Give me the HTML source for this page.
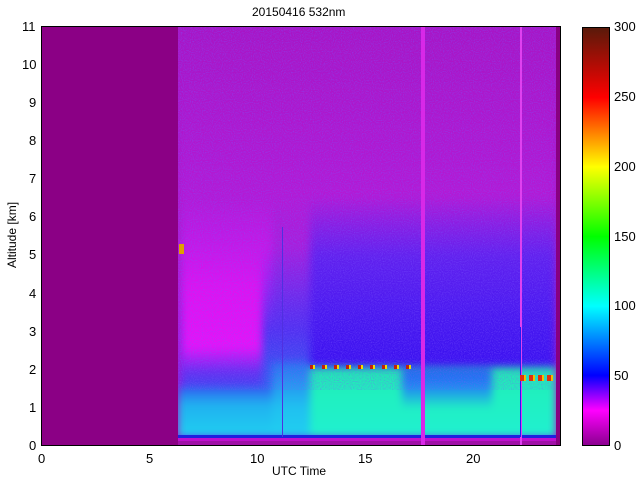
<!DOCTYPE html>
<html><head><style>
body{margin:0;width:640px;height:480px;background:#fff;position:relative;overflow:hidden;font-family:"Liberation Sans",sans-serif;font-size:13px;color:#000}
.a{position:absolute}
.t{position:absolute;white-space:nowrap}
</style></head><body>
<div class="t" style="left:252px;top:5px;font-size:12px">20150416 532nm</div>

<div class="a" style="left:42px;top:27px;width:519px;height:419px;background:#8b0085;overflow:hidden">
 <div class="a" style="left:136px;top:0;width:378px;height:419px;overflow:hidden;background:#a818c8">
  <div class="a" style="left:-10px;top:-10px;width:400px;height:440px;filter:blur(4px)">
  <div class="a" style="left:10px;top:10px;width:378px;height:419px;background:linear-gradient(180deg,#a814c4 0%,#b418d4 40%,#a020e0 62%,#8020e8 75%,#7020f0 100%)"></div>
  <div class="a" style="left:142px;top:180px;width:246px;height:170px;background:linear-gradient(180deg,rgba(110,30,230,0) 0%,#6020ee 35%,#4818f0 70%,#3a10f0 100%)"></div>
  <div class="a" style="left:14px;top:180px;width:90px;height:200px;background:linear-gradient(180deg,rgba(230,0,240,0) 0%,#e010f0 45%,#e810f8 75%,#6030f0 88%,#3050f0 100%)"></div>
  <div class="a" style="left:94px;top:230px;width:48px;height:140px;background:linear-gradient(180deg,rgba(90,40,230,0) 0%,#5030f0 60%,#3060f0 100%)"></div>
  <div class="a" style="left:10px;top:370px;width:132px;height:50px;background:linear-gradient(180deg,#3060f0 0%,#20b0f0 35%,#20d0f0 100%)"></div>
  <div class="a" style="left:104px;top:345px;width:38px;height:75px;background:linear-gradient(180deg,#2a70f0 0%,#20c0f0 60%,#20d0f0 100%)"></div>
  <div class="a" style="left:142px;top:350px;width:246px;height:70px;background:linear-gradient(180deg,#20e8b0 0%,#20f0c0 40%,#20f0d0 100%)"></div>
  <div class="a" style="left:234px;top:352px;width:90px;height:40px;background:linear-gradient(180deg,#2060f0 0%,#2090f0 50%,rgba(32,200,240,0) 100%)"></div>
  </div>
  <div class="a" style="left:0;top:408px;width:378px;height:3px;background:#2020e0"></div>
  <div class="a" style="left:0;top:411px;width:378px;height:3px;background:#c010d0"></div>
  <div class="a" style="left:0;top:414px;width:378px;height:5px;background:#a010a8"></div>
  <svg class="a" style="left:0;top:0" width="378" height="419"><filter id="n"><feTurbulence type="fractalNoise" baseFrequency="0.9" numOctaves="1" seed="3"/><feColorMatrix values="0 0 0 0 0.2  0 0 0 0 0.1  0 0 0 0 1  0 0 0 -2.2 1.3"/></filter><rect width="378" height="330" filter="url(#n)" opacity="0.5"/></svg>
 </div>
  <div class="a" style="left:379px;top:0;width:4px;height:419px;background:#d828e8"></div>
  <div class="a" style="left:478px;top:0;width:2px;height:419px;background:#e040f0"></div>
  <div class="a" style="left:478px;top:300px;width:1px;height:110px;background:#2020f0"></div>
  <div class="a" style="left:240px;top:200px;width:1px;height:210px;background:#5030e0"></div>
  <div class="a" style="left:268px;top:338px;width:105px;height:4px;background:repeating-linear-gradient(90deg,#c02010 0 3px,#f0e000 3px 5px,rgba(0,0,0,0) 5px 12px)"></div>
  <div class="a" style="left:478px;top:348px;width:36px;height:6px;background:repeating-linear-gradient(90deg,#e03010 0 4px,#f0c000 4px 6px,rgba(0,0,0,0) 6px 9px)"></div>
  <div class="a" style="left:137px;top:217px;width:5px;height:10px;background:#e0a000"></div>
  <div class="a" style="left:514px;top:0;width:5px;height:419px;background:#880080"></div>
</div>
<div class="a" style="left:41px;top:26px;width:520px;height:420px;border:1px solid #000;box-sizing:border-box"></div>

<div class="t" style="left:22px;top:19px">11</div>
<div class="t" style="left:22px;top:57px">10</div>
<div class="t" style="left:29px;top:95px">9</div>
<div class="t" style="left:29px;top:133px">8</div>
<div class="t" style="left:29px;top:171px">7</div>
<div class="t" style="left:29px;top:209px">6</div>
<div class="t" style="left:29px;top:247px">5</div>
<div class="t" style="left:29px;top:286px">4</div>
<div class="t" style="left:29px;top:324px">3</div>
<div class="t" style="left:29px;top:362px">2</div>
<div class="t" style="left:29px;top:400px">1</div>
<div class="t" style="left:29px;top:438px">0</div>
<div class="t" style="left:5px;top:268px;transform:rotate(-90deg);transform-origin:0 0;font-size:12px">Altitude [km]</div>

<div class="t" style="left:38px;top:451px">0</div>
<div class="t" style="left:146px;top:451px">5</div>
<div class="t" style="left:250px;top:451px">10</div>
<div class="t" style="left:358px;top:451px">15</div>
<div class="t" style="left:466px;top:451px">20</div>
<div class="t" style="left:272px;top:464px;font-size:12px">UTC Time</div>

<div class="a" style="left:582px;top:27px;width:28px;height:419px;border:1px solid #000;box-sizing:border-box;background:linear-gradient(0deg,#8b0090 0%,#ff00ff 8.3%,#0000ff 16.7%,#00ffff 33.3%,#00ff00 50%,#ffff00 66.7%,#ff0000 83.3%,#5a1a0a 100%)"></div>
<div class="t" style="left:614px;top:19px">300</div>
<div class="t" style="left:614px;top:89px">250</div>
<div class="t" style="left:614px;top:159px">200</div>
<div class="t" style="left:614px;top:229px">150</div>
<div class="t" style="left:614px;top:298px">100</div>
<div class="t" style="left:614px;top:368px">50</div>
<div class="t" style="left:614px;top:438px">0</div>
</body></html>
